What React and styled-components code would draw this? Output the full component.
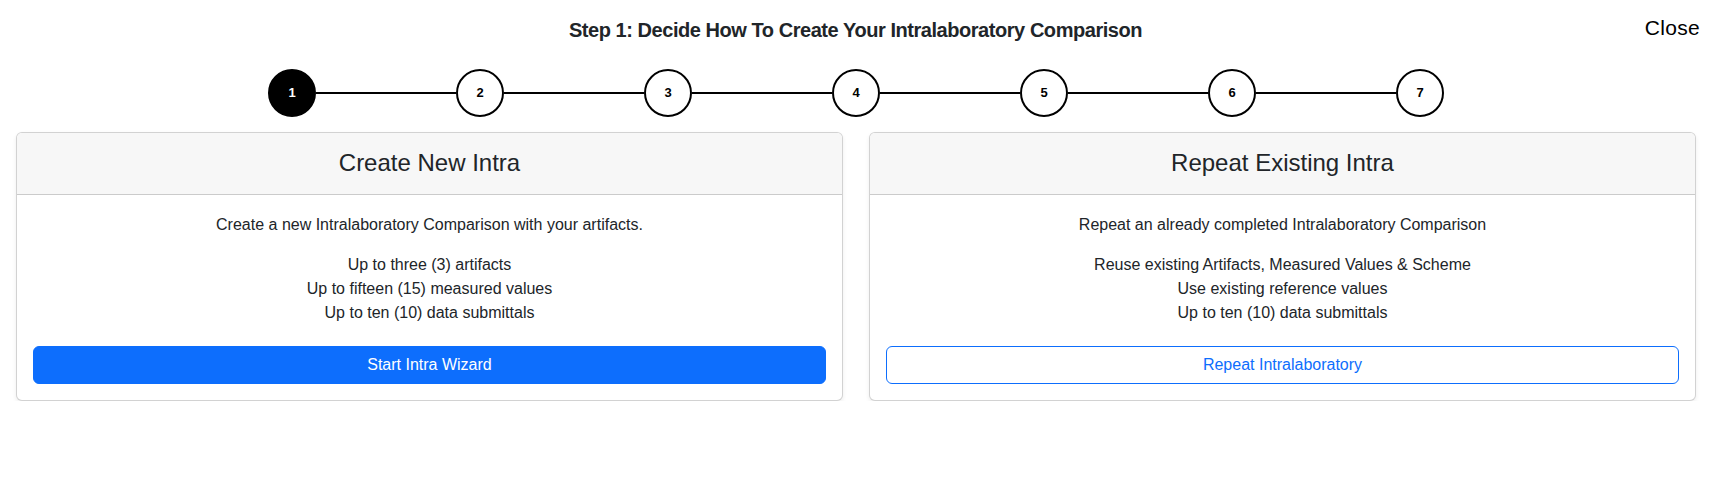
import React from "react";
import styled, { createGlobalStyle } from "styled-components";

const GlobalStyle = createGlobalStyle`
  html, body {
    margin: 0;
    padding: 0;
    background: #ffffff;
  }
  body {
    font-family: "Segoe UI", "Liberation Sans", Arial, sans-serif;
    font-size: 16px;
    line-height: 1.5;
    color: #212529;
  }
  * { box-sizing: border-box; }
`;

const Page = styled.div`
  padding: 0 15px 0 16px;
`;

const TopBar = styled.header`
  display: grid;
  grid-template-columns: 1fr auto 1fr;
  align-items: start;
  padding-top: 15px;
  margin: 0 -15px 0 -16px;
`;

const Title = styled.h5`
  grid-column: 2;
  margin: 0;
  font-size: 20px;
  line-height: 30px;
  font-weight: 700;
  letter-spacing: -0.45px;
  color: #212529;
  text-align: center;
`;

const CloseButton = styled.button`
  grid-column: 3;
  justify-self: end;
  margin: 0 11px 0 0;
  padding: 0;
  border: none;
  background: transparent;
  font-family: inherit;
  font-size: 21px;
  line-height: 26px;
  letter-spacing: 0.3px;
  color: #000;
  cursor: pointer;
`;

const Stepper = styled.div`
  display: flex;
  justify-content: center;
  align-items: center;
  margin-top: 24px;
`;

const StepCircle = styled.div`
  width: 48px;
  height: 48px;
  border-radius: 50%;
  border: 2px solid #000;
  background: ${(p) => (p.$active ? "#000" : "#fff")};
  color: ${(p) => (p.$active ? "#fff" : "#000")};
  display: flex;
  align-items: center;
  justify-content: center;
  font-size: 13px;
  font-weight: 700;
  flex: none;
`;

const Connector = styled.div`
  width: 140px;
  height: 2px;
  background: #000;
  flex: none;
`;

const Cards = styled.div`
  display: grid;
  grid-template-columns: 1fr 1fr;
  gap: 26px;
  margin-top: 15px;
`;

const Card = styled.section`
  border: 1px solid rgba(0, 0, 0, 0.175);
  border-radius: 6px;
  background: #fff;
  box-shadow: 0 2px 4px rgba(0, 0, 0, 0.075);
  overflow: hidden;
  display: flex;
  flex-direction: column;
`;

const CardHeader = styled.div`
  background: #f7f7f7;
  border-bottom: 1px solid rgba(0, 0, 0, 0.175);
  padding: 16px;
  text-align: center;
`;

const CardTitle = styled.h4`
  margin: 0;
  font-size: 24px;
  line-height: 1.2;
  font-weight: 400;
  color: #212529;
`;

const CardBody = styled.div`
  padding: 18px 16px 16px;
  text-align: center;
  display: flex;
  flex-direction: column;
  flex: 1;
`;

const Lead = styled.p`
  margin: 0 0 16px;
`;

const Features = styled.ul`
  list-style: none;
  margin: 0 0 21px;
  padding: 0;
`;

const Feature = styled.li`
  line-height: 24px;
`;

const ActionButton = styled.button`
  margin-top: auto;
  width: 100%;
  padding: 6px 12px;
  font-family: inherit;
  font-size: 16px;
  line-height: 24px;
  border-radius: 6px;
  border: 1px solid #0d6efd;
  background: ${(p) => (p.$outline ? "#fff" : "#0d6efd")};
  color: ${(p) => (p.$outline ? "#0d6efd" : "#fff")};
  cursor: pointer;
`;

const cards = [
  {
    title: "Create New Intra",
    lead: "Create a new Intralaboratory Comparison with your artifacts.",
    features: [
      "Up to three (3) artifacts",
      "Up to fifteen (15) measured values",
      "Up to ten (10) data submittals",
    ],
    action: "Start Intra Wizard",
    outline: false,
  },
  {
    title: "Repeat Existing Intra",
    lead: "Repeat an already completed Intralaboratory Comparison",
    features: [
      "Reuse existing Artifacts, Measured Values & Scheme",
      "Use existing reference values",
      "Up to ten (10) data submittals",
    ],
    action: "Repeat Intralaboratory",
    outline: true,
  },
];

const steps = [1, 2, 3, 4, 5, 6, 7];

export default function App() {
  return (
    <>
      <GlobalStyle />
      <Page>
        <TopBar>
          <Title>Step 1: Decide How To Create Your Intralaboratory Comparison</Title>
          <CloseButton type="button">Close</CloseButton>
        </TopBar>
        <Stepper>
          {steps.map((s, i) => (
            <React.Fragment key={s}>
              {i > 0 && <Connector />}
              <StepCircle $active={s === 1}>{s}</StepCircle>
            </React.Fragment>
          ))}
        </Stepper>
        <Cards>
          {cards.map((c) => (
            <Card key={c.title}>
              <CardHeader>
                <CardTitle>{c.title}</CardTitle>
              </CardHeader>
              <CardBody>
                <Lead>{c.lead}</Lead>
                <Features>
                  {c.features.map((f) => (
                    <Feature key={f}>{f}</Feature>
                  ))}
                </Features>
                <ActionButton type="button" $outline={c.outline}>
                  {c.action}
                </ActionButton>
              </CardBody>
            </Card>
          ))}
        </Cards>
      </Page>
    </>
  );
}
